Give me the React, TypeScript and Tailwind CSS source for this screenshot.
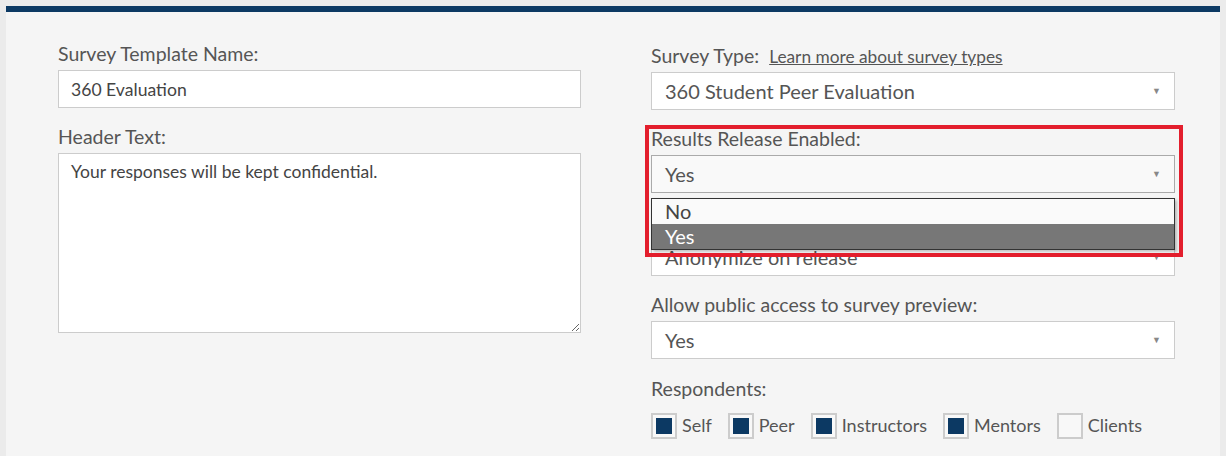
import React from "react";

const respondents = [
  { label: "Self", checked: true },
  { label: "Peer", checked: true },
  { label: "Instructors", checked: true },
  { label: "Mentors", checked: true },
  { label: "Clients", checked: false },
];

function Label({ children }: { children: React.ReactNode }) {
  return <div className="h-[24px] text-[19.5px] leading-[24px] text-[#555]">{children}</div>;
}

function Select({ value, muted }: { value: string; muted?: boolean }) {
  return (
    <div
      className={`mt-[4px] flex h-[38px] items-center justify-between border pl-[13px] pr-[13px] text-[20px] text-[#555] ${
        muted ? "border-[#aaa] bg-[#f9f9f9]" : "border-[#ccc] bg-white"
      }`}
    >
      <span>{value}</span>
      <span className="text-[9px] text-[#888]">▼</span>
    </div>
  );
}

export default function App() {
  return (
    <div className="min-h-[456px] bg-[#ebebeb] px-[6px] pt-[6px] font-['Lato',sans-serif]">
      <div className="min-h-[450px] border-t-[6px] border-[#0c3963] bg-[#f5f5f5] pl-[52px] pr-[45px] pt-[30px]">
        <div className="flex gap-[70px]">
          {/* left column */}
          <div className="w-[523px]">
            <Label>Survey Template Name:</Label>
            <input
              readOnly
              value="360 Evaluation"
              className="mt-[4px] h-[38px] w-full border border-[#ccc] bg-white px-[12px] text-[17.6px] text-[#444] outline-none"
            />
            <div className="mt-[17px]">
              <Label>Header Text:</Label>
              <textarea
                readOnly
                defaultValue="Your responses will be kept confidential."
                className="mt-[4px] block h-[180px] w-full border border-[#ccc] bg-white px-[12px] py-[6px] text-[17.5px] leading-[24px] text-[#444] outline-none"
              />
            </div>
          </div>

          {/* right column */}
          <div className="relative mt-[2px] w-[524px]">
            <div className="flex h-[24px] items-baseline gap-[10px]">
              <span className="text-[19.5px] leading-[24px] text-[#555]">Survey Type:</span>
              <a className="text-[17.3px] text-[#555] underline">Learn more about survey types</a>
            </div>
            <Select value="360 Student Peer Evaluation" />

            <div className="relative mt-[17px]">
              <Label>Results Release Enabled:</Label>
              <Select value="Yes" muted />
              {/* open dropdown */}
              <div className="absolute left-0 right-0 top-[71px] z-10 border border-[#333] bg-[#fafafa] text-[20px] shadow-[2px_2px_3px_rgba(0,0,0,0.25)]">
                <div className="h-[25px] pl-[13px] leading-[25px] text-[#444]">No</div>
                <div className="h-[25px] bg-[#777] pl-[13px] leading-[25px] text-white">Yes</div>
              </div>
              {/* highlight */}
              <div className="pointer-events-none absolute -left-[6px] -right-[8px] -top-[2px] z-20 h-[132px] border-[4px] border-[#e31e2d]" />
            </div>

            <div className="mt-[17px]">
              <Label>Results Anonymity:</Label>
              <Select value="Anonymize on release" />
            </div>

            <div className="mt-[17px]">
              <Label>Allow public access to survey preview:</Label>
              <Select value="Yes" />
            </div>

            <div className="mt-[18px]">
              <Label>Respondents:</Label>
              <div className="mt-[11px] flex items-center gap-[16px]">
                {respondents.map((r) => (
                  <div key={r.label} className="flex items-center gap-[5px]">
                    <div className="flex h-[26px] w-[26px] items-center justify-center border-2 border-[#ccc] bg-[#f8f8f8]">
                      {r.checked && <div className="h-[16px] w-[16px] bg-[#0c3963]" />}
                    </div>
                    <span className="text-[18px] text-[#555]">{r.label}</span>
                  </div>
                ))}
              </div>
            </div>
          </div>
        </div>
      </div>
    </div>
  );
}
